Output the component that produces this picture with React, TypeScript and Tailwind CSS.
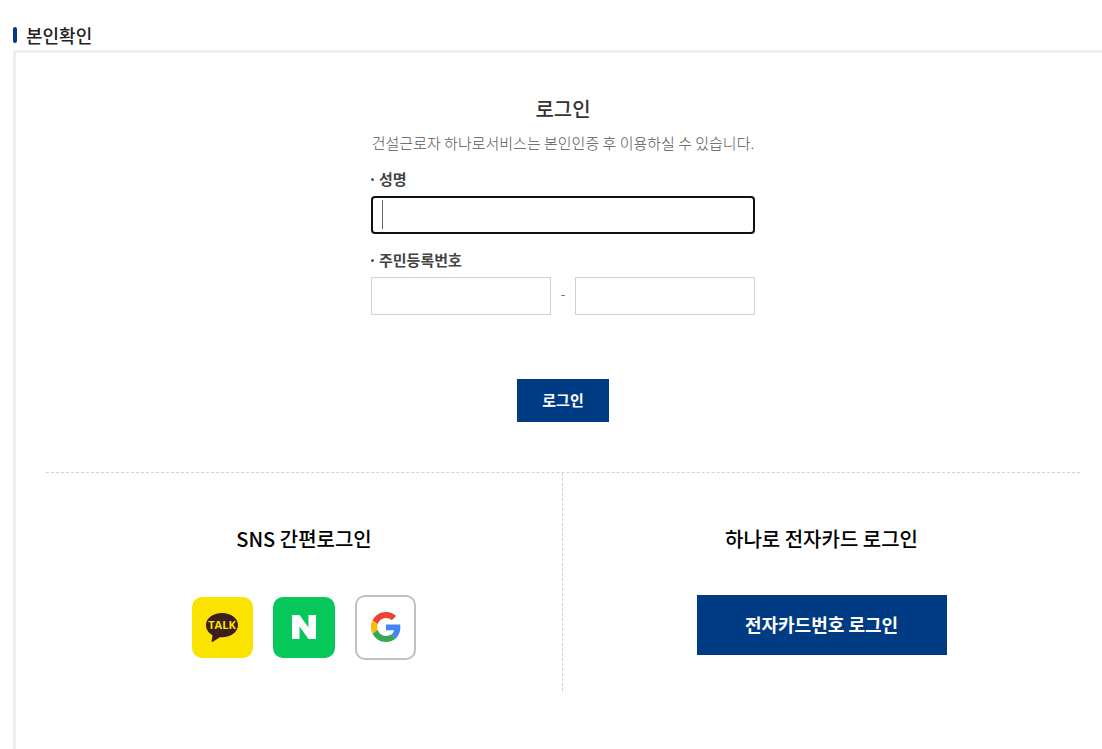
import React from "react";

function KakaoMark() {
  return (
    <svg viewBox="0 0 61 61" className="h-full w-full" aria-hidden="true">
      <path
        d="M30 16c-9 0-16 5.300-16 12 0 4.500 2.500 8 6.500 10.200L19.600 44c-.1.800.7 1.200 1.300.8l7-4.600c.7.100 1.400.1 2.100.1 9 0 16-5.500 16-12.300S39 16 30 16Z"
        fill="#3c1e1e"
      />
      <text
        x="30"
        y="32"
        textAnchor="middle"
        fontFamily="'Open Sans', 'Liberation Sans', sans-serif"
        fontWeight="700"
        fontSize="11"
        fill="#fbe300"
      >
        TALK
      </text>
    </svg>
  );
}

function NaverMark() {
  return (
    <svg viewBox="0 0 62 61" className="h-full w-full" aria-hidden="true">
      <path d="M19 18h7.500l9 12.500V18H43v24h-7.500l-9-12.500V42H19Z" fill="#fff" />
    </svg>
  );
}

function GoogleMark() {
  return (
    <svg viewBox="0 0 48 48" className="h-[30px] w-[30px]" aria-hidden="true">
      <path fill="#EA4335" d="M24 9.500c3.540 0 6.710 1.220 9.210 3.600l6.850-6.850C35.900 2.380 30.470 0 24 0 14.620 0 6.510 5.380 2.560 13.220l7.980 6.190C12.430 13.720 17.740 9.500 24 9.500z" />
      <path fill="#4285F4" d="M46.980 24.550c0-1.570-.15-3.090-.38-4.550H24v9.020h12.940c-.58 2.960-2.260 5.480-4.780 7.180l7.730 6c4.510-4.180 7.090-10.360 7.090-17.650z" />
      <path fill="#FBBC05" d="M10.530 28.590c-.48-1.450-.76-2.990-.76-4.590s.27-3.140.76-4.590l-7.980-6.190C.92 16.460 0 20.120 0 24c0 3.880.92 7.540 2.560 10.780l7.970-6.190z" />
      <path fill="#34A853" d="M24 48c6.480 0 11.930-2.130 15.890-5.810l-7.730-6c-2.150 1.450-4.920 2.300-8.160 2.300-6.260 0-11.570-4.220-13.470-9.910l-7.980 6.190C6.510 42.620 14.620 48 24 48z" />
    </svg>
  );
}

function FieldLabel({ htmlFor, children }: { htmlFor: string; children: React.ReactNode }) {
  return (
    <label htmlFor={htmlFor} className="flex h-6 items-center gap-[5px] text-[15px] font-bold leading-6 text-[#444]">
      <span className="h-[3px] w-[3px] rounded-full bg-[#555]" />
      {children}
    </label>
  );
}

export default function App() {
  return (
    <main className="min-h-screen bg-white pl-[13px] pt-5 font-['Noto_Sans_CJK_KR','Noto_Sans',sans-serif] text-[#333]">
      <h1 className="flex h-[30px] items-center gap-[9px] text-lg font-medium leading-[26px] text-[#222]">
        <span className="h-4 w-1 rounded-sm bg-[#003b83]" />
        본인확인
      </h1>

      <section className="min-h-[699px] border-l-[3px] border-t-[3px] border-[#eee] pl-[30px] pr-[22px]">
        <form
          className="mx-auto flex w-[384px] max-w-full flex-col pt-10"
          onSubmit={(event) => event.preventDefault()}
        >
          <h2 className="text-center text-xl font-medium leading-8">로그인</h2>
          <p className="mt-1.5 whitespace-nowrap text-center text-[15px] font-light leading-6 text-[#555]">
            건설근로자 하나로서비스는 본인인증 후 이용하실 수 있습니다.
          </p>

          <div className="mt-3">
            <FieldLabel htmlFor="name">성명</FieldLabel>
            <div className="relative mt-[5px]">
              <input
                id="name"
                type="text"
                className="block h-[38px] w-full rounded-[4px] border-2 border-[#101010] px-[9px] text-[15px] caret-transparent outline-none"
              />
              <span className="pointer-events-none absolute left-[11px] top-1 h-[29px] w-px bg-[#666]" />
            </div>
          </div>

          <div className="mt-[14px]">
            <FieldLabel htmlFor="birth">주민등록번호</FieldLabel>
            <div className="mt-[5px] flex items-center">
              <input
                id="birth"
                type="text"
                inputMode="numeric"
                className="h-[38px] min-w-0 flex-1 border border-[#d2d2d2] px-[10px] text-[15px] outline-none"
              />
              <span className="w-6 pb-1 text-center text-[15px] font-light text-[#555]">-</span>
              <input
                type="password"
                aria-label="주민등록번호 뒷자리"
                className="h-[38px] min-w-0 flex-1 border border-[#d2d2d2] px-[10px] text-[15px] outline-none"
              />
            </div>
          </div>

          <button
            type="submit"
            className="mt-16 h-[43px] w-[92px] self-center bg-[#003b83] text-[15px] font-bold text-white"
          >
            로그인
          </button>
        </form>

        <div className="mt-[50px] grid grid-cols-2 border-t border-dashed border-[#d2d2d2] text-black">
          <section className="flex h-[218px] flex-col items-center border-r border-dashed border-[#d2d2d2] pt-[50px]">
            <h2 className="text-xl font-medium leading-8">SNS 간편로그인</h2>
            <div className="mt-10 flex items-center gap-5">
              <button type="button" aria-label="카카오 로그인" className="h-[61px] w-[61px] rounded-[10px] bg-[#fbe300]">
                <KakaoMark />
              </button>
              <button type="button" aria-label="네이버 로그인" className="h-[61px] w-[62px] rounded-[10px] bg-[#05c75a]">
                <NaverMark />
              </button>
              <button
                type="button"
                aria-label="구글 로그인"
                className="flex h-[65px] w-[61px] items-center justify-center rounded-[10px] border-2 border-[#c0c0c0] bg-white pb-0.5"
              >
                <GoogleMark />
              </button>
            </div>
          </section>
          <section className="flex flex-col items-center pt-[50px]">
            <h2 className="text-xl font-medium leading-8">하나로 전자카드 로그인</h2>
            <button type="button" className="mt-10 h-[60px] w-[250px] bg-[#003b83] pb-0.5 text-lg font-bold text-white">
              전자카드번호 로그인
            </button>
          </section>
        </div>
      </section>
    </main>
  );
}
